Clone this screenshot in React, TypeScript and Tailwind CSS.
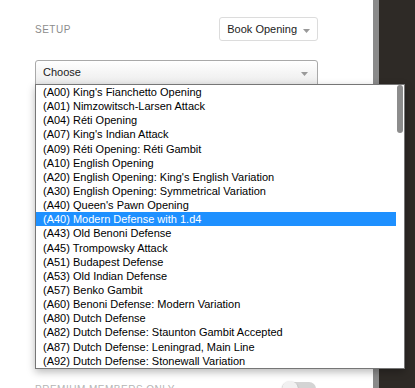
const openings = [
  "(A00) King's Fianchetto Opening",
  "(A01) Nimzowitsch-Larsen Attack",
  "(A04) Réti Opening",
  "(A07) King's Indian Attack",
  "(A09) Réti Opening: Réti Gambit",
  "(A10) English Opening",
  "(A20) English Opening: King's English Variation",
  "(A30) English Opening: Symmetrical Variation",
  "(A40) Queen's Pawn Opening",
  "(A40) Modern Defense with 1.d4",
  "(A43) Old Benoni Defense",
  "(A45) Trompowsky Attack",
  "(A51) Budapest Defense",
  "(A53) Old Indian Defense",
  "(A57) Benko Gambit",
  "(A60) Benoni Defense: Modern Variation",
  "(A80) Dutch Defense",
  "(A82) Dutch Defense: Staunton Gambit Accepted",
  "(A87) Dutch Defense: Leningrad, Main Line",
  "(A92) Dutch Defense: Stonewall Variation",
];

function Caret() {
  return (
    <svg width="7" height="4" viewBox="0 0 7 4" className="shrink-0">
      <path d="M0 0 L7 0 L3.5 4 Z" fill="#999999" />
    </svg>
  );
}

export default function App() {
  const selected = 9;

  return (
    <div className="relative flex h-[388px] w-[415px] overflow-hidden font-['Liberation_Sans',Arial,sans-serif] text-black">
      <div className="flex w-[373px] flex-col bg-white pl-[35px] pr-[55px]">
        <div className="mt-[17px] flex h-[24px] items-center justify-between">
          <span className="text-[10px] tracking-[0.5px] text-[#8c8c8c]">SETUP</span>
          <button className="flex h-[24px] items-center gap-[6px] rounded-[3px] border border-[#dcdcdc] bg-white pl-[7px] pr-[7px] text-[11px] text-[#222]">
            Book Opening
            <span className="mt-[3px]">
              <Caret />
            </span>
          </button>
        </div>

        <div className="mt-[19px] flex h-[25px] items-center justify-between rounded-t-[3px] border border-[#a9a9a9] bg-gradient-to-b from-white to-[#ececec] pl-[7px] pr-[9px] text-[11px] text-[#222]">
          Choose
          <span className="mt-[3px]">
            <Caret />
          </span>
        </div>

        <div className="mt-auto mb-[-11px] flex h-[20px] items-center justify-between">
          <span className="text-[10px] tracking-[0.5px] text-[#b5b5b5]">PREMIUM MEMBERS ONLY</span>
          <div className="mr-[2px] flex h-[14px] w-[34px] items-center rounded-full bg-[#d4d4d4]">
            <div className="h-[16px] w-[16px] rounded-full bg-[#f1f1f1] shadow-[0_1px_2px_rgba(0,0,0,0.3)]" />
          </div>
        </div>
      </div>
      <div className="w-[6px] bg-[#8a8a8a]" />
      <div className="flex-1 bg-[#2e2a26]" />

      <div className="absolute left-[35px] top-[84px] flex h-[285px] w-[370px] border border-[#767676] bg-white shadow-[0_3px_8px_rgba(0,0,0,0.28)]">
        <div className="flex flex-1 flex-col">
          {openings.map((o, i) => (
            <div
              key={i}
              className={
                i === selected
                  ? "h-[14.15px] whitespace-nowrap bg-[#1e90ff] pl-[7px] text-[11px] leading-[14.15px] text-white"
                  : "h-[14.15px] whitespace-nowrap pl-[7px] text-[11px] leading-[14.15px]"
              }
            >
              {o}
            </div>
          ))}
        </div>
        <div className="w-[8px] pl-[1px]">
          <div className="h-[48px] w-[6px] rounded-[3px] bg-[#8c8c8c]" />
        </div>
      </div>
    </div>
  );
}
